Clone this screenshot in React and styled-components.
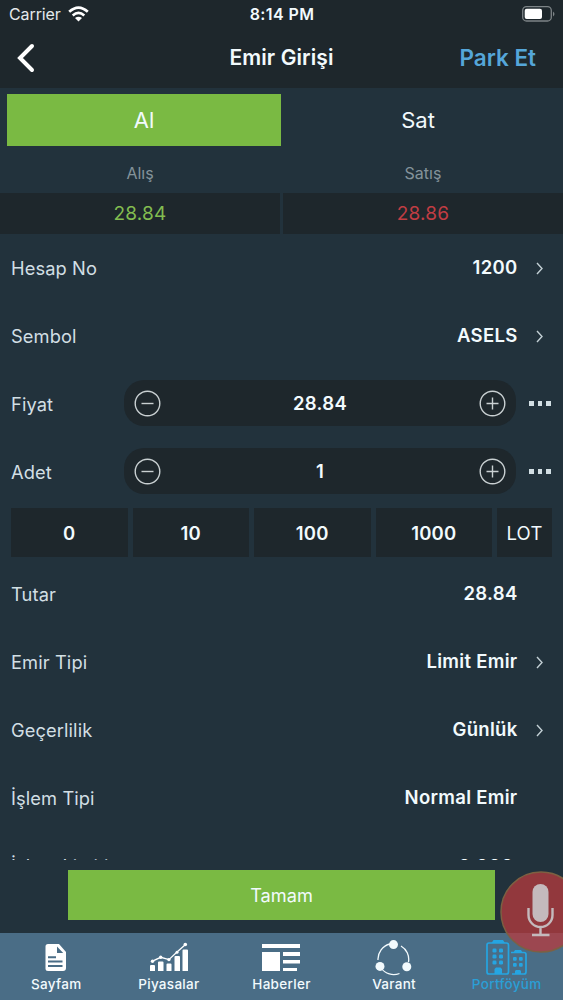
import React from "react";
import styled, { createGlobalStyle } from "styled-components";

const GlobalStyle = createGlobalStyle`
  * {
    box-sizing: border-box;
  }
  body {
    margin: 0;
    background-color: #22323c;
    font-family: Inter, "Liberation Sans", sans-serif;
  }
  button {
    padding: 0;
    border: none;
    background: none;
    color: inherit;
    font: inherit;
    letter-spacing: inherit;
  }
  svg {
    display: block;
    flex-shrink: 0;
  }
`;

const Screen = styled.div`
  position: relative;
  display: flex;
  flex-direction: column;
  width: 563px;
  height: 1000px;
  overflow: hidden;
  color: #f2fafd;
  background-color: #22323c;
`;

const TopBar = styled.header`
  height: 88px;
  background-color: #1e272c;
`;

const StatusBar = styled.div`
  display: grid;
  grid-template-columns: 1fr auto 1fr;
  align-items: center;
  height: 28px;
  padding: 0 8px 0 9px;
`;

const Carrier = styled.div`
  display: flex;
  align-items: center;
  gap: 7px;
  font-size: 16px;
  letter-spacing: -0.1px;
  color: #e4e9eb;
`;

const Clock = styled.div`
  font-size: 16px;
  font-weight: 600;
  letter-spacing: 0.4px;
`;

const Battery = styled.div`
  justify-self: end;
`;

const NavBar = styled.div`
  display: grid;
  grid-template-columns: 1fr auto 1fr;
  align-items: center;
  height: 59px;
  padding: 0 27px 0 17px;
`;

const Title = styled.h1`
  margin: 0 0 0 10px;
  font-size: 21px;
  font-weight: 600;
  letter-spacing: 0.1px;
`;

const ParkButton = styled.button`
  justify-self: end;
  font-size: 22.5px;
  font-weight: 600;
  color: #55a6d9;
`;

const SideTabs = styled.div`
  display: flex;
  height: 64px;
  padding: 6px 8px 6px 7px;
`;

const SideTab = styled.button`
  flex: 1;
  font-size: 22px;
  background-color: ${(props) => (props.$active ? "#7aba43" : "transparent")};
`;

const Prices = styled.div`
  display: grid;
  grid-template-columns: 1fr 1fr;
  column-gap: 3px;
  height: 82px;
`;

const PriceTitle = styled.div`
  height: 41px;
  line-height: 43px;
  font-size: 16px;
  text-align: center;
  color: #84939a;
`;

const Price = styled.div`
  height: 41px;
  line-height: 41px;
  font-size: 19px;
  letter-spacing: 0.2px;
  text-align: center;
  color: ${(props) => props.$color};
  background-color: #1e272c;
`;

const Form = styled.main`
  height: 626px;
  overflow: hidden;
`;

const Row = styled.div`
  display: flex;
  align-items: center;
  height: ${(props) => (props.$last ? 69 : 68)}px;
  padding-left: 11px;
`;

const Label = styled.div`
  width: 113px;
  padding-bottom: 1px;
  font-size: 18.3px;
  letter-spacing: 0.1px;
  white-space: nowrap;
  color: #d2dfe4;
`;

const Value = styled.div`
  flex: 1;
  padding-right: ${(props) => (props.$last ? 4 : 0)}px;
  padding-bottom: 2px;
  font-size: 18.5px;
  font-weight: 600;
  letter-spacing: 0.3px;
  text-align: right;
`;

const RowEnd = styled.div`
  width: 45.5px;
  padding-left: 17px;
`;

const Stepper = styled.div`
  display: flex;
  align-items: center;
  justify-content: space-between;
  width: 392px;
  height: 46px;
  margin-bottom: 2px;
  padding: 0 10px;
  border-radius: 20px;
  font-size: 18.5px;
  font-weight: 600;
  letter-spacing: 0.3px;
  background-color: #1e272c;
`;

const More = styled.button`
  display: flex;
  gap: 4px;
  margin: 0 0 1px 13px;
`;

const Dot = styled.span`
  width: 4.5px;
  height: 4.5px;
  background-color: #d2dfe4;
`;

const Amounts = styled.div`
  display: grid;
  grid-template-columns: repeat(4, 1fr) 55px;
  gap: 5px;
  height: 54px;
  padding: 2px 11px 3px;
`;

const Amount = styled.button`
  font-size: 18.5px;
  font-weight: ${(props) => (props.$unit ? 400 : 600)};
  letter-spacing: 0.2px;
  background-color: #1e272c;
`;

const Footer = styled.footer`
  display: flex;
  justify-content: center;
  height: 73px;
  padding: 10px 68px 13px;
`;

const SubmitButton = styled.button`
  flex: 1;
  font-size: 18.2px;
  background-color: #7aba43;
`;

const TabBar = styled.nav`
  display: grid;
  grid-template-columns: repeat(5, 1fr);
  height: 67px;
  background-color: #4a6d86;
`;

const Tab = styled.button`
  display: flex;
  flex-direction: column;
  align-items: center;
  padding-top: 5px;
  font-size: 13.5px;
  font-weight: 500;
  line-height: 16px;
  letter-spacing: 0.3px;
  color: ${(props) => (props.$active ? "#2a9fd6" : "#f2fafd")};
`;

const VoiceButton = styled.button`
  position: absolute;
  left: 500px;
  top: 871px;
  width: 82px;
  height: 82px;
`;

const ChevronRight = () => (
  <svg width="10" height="16" viewBox="0 0 10 16" fill="none" stroke="#c3d0d5" strokeWidth="1.4">
    <path d="M2 3l5 5.5L2 14" />
  </svg>
);

const StepIcon = ({ plus }) => (
  <svg width="27" height="27" viewBox="0 0 27 27" fill="none" stroke="#c9d0d2" strokeWidth="1.4">
    <circle cx="13.5" cy="13.5" r="12.3" />
    <path d={plus ? "M7.5 13.5h12M13.5 7.5v12" : "M7.5 13.5h12"} />
  </svg>
);

const PageIcon = () => (
  <svg width="38" height="38" viewBox="0 0 38 38">
    <path
      fill="#fff"
      fillRule="evenodd"
      d="M11 6h11l7 8v16q0 3-3 3H11q-2.500 0-2.500-2.500V8.500Q8.500 6 11 6zM20 8.500V15h6.200z"
    />
    <path stroke="#4a6d86" strokeWidth="2" d="M11 19.200h8M11 23.500h14.500M11 28h14.500" />
  </svg>
);

const MarketIcon = () => (
  <svg width="42" height="38" viewBox="0 0 42 38" fill="#fff">
    <path d="M2 28q0-1 1-1h3q1 0 1 1v5H2zM10 24.500q0-1 1-1h3.500q1 0 1 1V33H10zM18.500 26.500q0-1 1-1h3q1 0 1 1V33h-5zM26.500 19q0-1 1-1H31q1 0 1 1v14h-5.500zM34.500 12.500q0-1 1-1H39q1 0 1 1V33h-5.500z" />
    <path d="M4.500 23.200l8.200-3.900 8.200 2.300L29 14l8.500-7.500" fill="none" stroke="#fff" strokeWidth="1.300" />
    <circle cx="4.500" cy="23.200" r="1.700" />
    <circle cx="12.700" cy="19.300" r="1.700" />
    <circle cx="20.900" cy="21.600" r="1.700" />
    <circle cx="29" cy="14.300" r="1.500" />
    <circle cx="37.300" cy="6.500" r="1.800" />
  </svg>
);

const NewsIcon = () => (
  <svg width="38" height="38" viewBox="0 0 38 38" fill="#fff">
    <path d="M0 6h38v4H0zM0 14h18v19H0zM21 14h17v4H21zM21 22h17v3.500H21zM21 30h14v3H21z" />
  </svg>
);

const WarrantIcon = () => (
  <svg width="38" height="38" viewBox="0 0 38 38" fill="none" stroke="#f2fafd" strokeWidth="1.300">
    <path d="M3 22A15.500 15.500 0 0 1 15 6M26 8A15.500 15.500 0 0 1 33.500 24M6 30a15.500 15.500 0 0 0 18.500 5.500" />
    <g fill="#f2fafd" stroke="none">
      <circle cx="18.500" cy="6.600" r="4.500" />
      <circle cx="5" cy="28.400" r="4.500" />
      <circle cx="31.800" cy="28.700" r="4.500" />
    </g>
  </svg>
);

const PortfolioIcon = () => (
  <svg width="42" height="38" viewBox="0 0 42 38" fill="none" stroke="#25a5e2" strokeWidth="1.700">
    <path d="M3 5h17.500q2 0 2 2v27q0 2-2 2H3q-2 0-2-2V7q0-2 2-2zM25 14.500h13q2 0 2 2V34q0 2-2 2H26" />
    <g fill="#25a5e2" stroke="none">
      <path d="M5.500 5L7.500 2h9.500l2 3zM27.500 14.500l1.500-2.500h6l1.500 2.500zM8.500 36v-5l1.500-1.500h4.500L16 31v5zM29 36v-3l1-1h4l1 1v3z" />
      <rect x="6.500" y="10.500" width="4" height="4" rx="1.200" />
      <rect x="13" y="10.500" width="4" height="4" rx="1.200" />
      <rect x="6.500" y="16.500" width="4" height="4" rx="1.200" />
      <rect x="13" y="16.500" width="4" height="4" rx="1.200" />
      <rect x="6.500" y="22.500" width="4" height="4" rx="1.200" />
      <rect x="13" y="22.500" width="4" height="4" rx="1.200" />
      <rect x="27" y="19" width="3.700" height="3.700" rx="1" />
      <rect x="33" y="19" width="3.700" height="3.700" rx="1" />
      <rect x="27" y="25" width="3.700" height="3.700" rx="1" />
      <rect x="33" y="25" width="3.700" height="3.700" rx="1" />
    </g>
  </svg>
);

const tabs = [
  { name: "Sayfam", icon: <PageIcon /> },
  { name: "Piyasalar", icon: <MarketIcon /> },
  { name: "Haberler", icon: <NewsIcon /> },
  { name: "Varant", icon: <WarrantIcon /> },
  { name: "Portföyüm", icon: <PortfolioIcon />, active: true },
];

const FormRow = ({ label, value, link, last }) => (
  <Row $last={last}>
    <Label>{label}</Label>
    <Value $last={last}>{value}</Value>
    <RowEnd>{link && <ChevronRight />}</RowEnd>
  </Row>
);

const StepperRow = ({ label, value }) => (
  <Row>
    <Label>{label}</Label>
    <Stepper>
      <StepIcon />
      <span>{value}</span>
      <StepIcon plus />
    </Stepper>
    <More>
      <Dot />
      <Dot />
      <Dot />
    </More>
  </Row>
);

const App = () => {
  return (
    <Screen>
      <GlobalStyle />
      <TopBar>
        <StatusBar>
          <Carrier>
            Carrier
            <svg width="21" height="16" viewBox="0 0 21 16" fill="none" stroke="#fff" strokeWidth="2.700">
              <path d="M1.200 5.800q9.300-8.400 18.600 0M4.700 9.400q5.800-5 11.600 0" />
              <path d="M7 12q3.500-2.700 7 0l-3.500 3.600z" fill="#fff" stroke="none" />
            </svg>
          </Carrier>
          <Clock>8:14 PM</Clock>
          <Battery>
            <svg width="33" height="16" viewBox="0 0 33 16">
              <rect x="0.700" y="0.700" width="28.600" height="14.300" rx="3.800" fill="none" stroke="#7d8487" strokeWidth="1.300" />
              <rect x="2.700" y="2.700" width="17.300" height="10.300" rx="2" fill="#fff" />
              <path d="M31 5.500q3 2.500 0 5z" fill="#7d8487" />
            </svg>
          </Battery>
        </StatusBar>
        <NavBar>
          <svg width="18" height="30" viewBox="0 0 18 30" fill="none" stroke="#fff" strokeWidth="4">
            <path d="M15 3L3 15l12 12" strokeLinecap="round" />
          </svg>
          <Title>Emir Girişi</Title>
          <ParkButton>Park Et</ParkButton>
        </NavBar>
      </TopBar>
      <SideTabs>
        <SideTab $active>Al</SideTab>
        <SideTab>Sat</SideTab>
      </SideTabs>
      <Prices>
        <PriceTitle>Alış</PriceTitle>
        <PriceTitle>Satış</PriceTitle>
        <Price $color="#83bd50">28.84</Price>
        <Price $color="#c13d43">28.86</Price>
      </Prices>
      <Form>
        <FormRow label="Hesap No" value="1200" link />
        <FormRow label="Sembol" value="ASELS" link />
        <StepperRow label="Fiyat" value="28.84" />
        <StepperRow label="Adet" value="1" />
        <Amounts>
          <Amount>0</Amount>
          <Amount>10</Amount>
          <Amount>100</Amount>
          <Amount>1000</Amount>
          <Amount $unit>LOT</Amount>
        </Amounts>
        <FormRow label="Tutar" value="28.84" />
        <FormRow label="Emir Tipi" value="Limit Emir" link />
        <FormRow label="Geçerlilik" value="Günlük" link />
        <FormRow label="İşlem Tipi" value="Normal Emir" />
        <FormRow label="İşlem Limiti" value="0.000" last />
      </Form>
      <Footer>
        <SubmitButton>Tamam</SubmitButton>
      </Footer>
      <TabBar>
        {tabs.map((tab) => (
          <Tab key={tab.name} $active={tab.active}>
            {tab.icon}
            {tab.name}
          </Tab>
        ))}
      </TabBar>
      <VoiceButton>
        <svg width="82" height="82" viewBox="0 0 82 82">
          <circle cx="41" cy="41" r="40" fill="#b83b3e" fillOpacity="0.750" stroke="#7d6042" strokeWidth="1.500" />
          <rect x="32.500" y="13" width="16" height="38" rx="8" fill="#c4babd" />
          <path d="M28.500 37v7a12 12 0 0 0 24 0v-7M40.500 56v7M32 64h17.500" fill="none" stroke="#c4babd" strokeWidth="2.400" />
        </svg>
      </VoiceButton>
    </Screen>
  );
};

export default App;
